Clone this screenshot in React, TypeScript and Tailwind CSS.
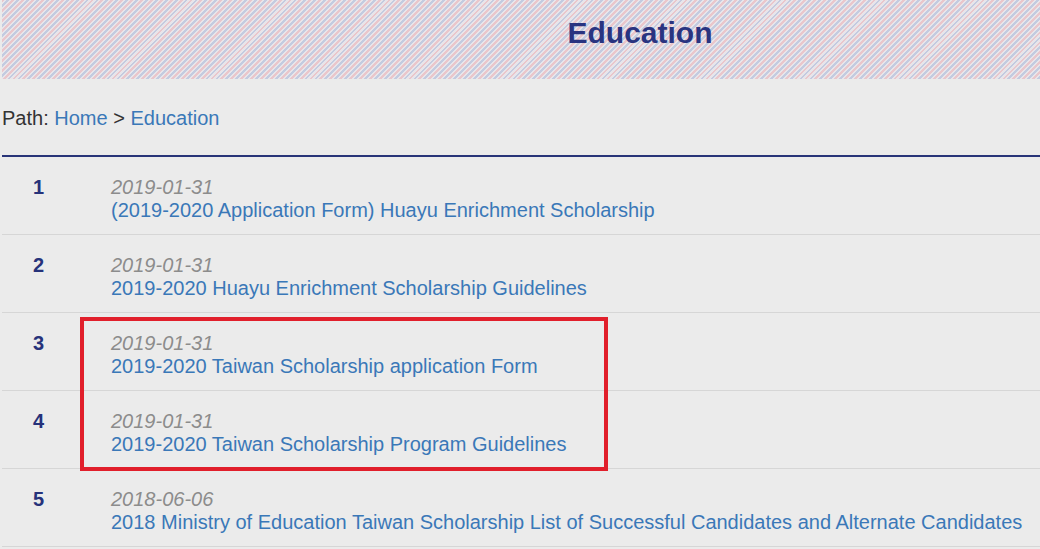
import React from "react";

const rows = [
  { n: 1, date: "2019-01-31", title: "(2019-2020 Application Form) Huayu Enrichment Scholarship" },
  { n: 2, date: "2019-01-31", title: "2019-2020 Huayu Enrichment Scholarship Guidelines" },
  { n: 3, date: "2019-01-31", title: "2019-2020 Taiwan Scholarship application Form" },
  { n: 4, date: "2019-01-31", title: "2019-2020 Taiwan Scholarship Program Guidelines" },
  { n: 5, date: "2018-06-06", title: "2018 Ministry of Education Taiwan Scholarship List of Successful Candidates and Alternate Candidates" },
];

export default function App() {
  return (
    <div
      className="relative w-[1040px] h-[549px] overflow-hidden bg-[#ebebeb] pl-[2px]"
      style={{ fontFamily: '"Liberation Sans", Arial, sans-serif' }}
    >
      <div className="h-[79px] flex justify-center pl-[238px] pt-[15px] bg-[repeating-linear-gradient(135deg,#eac6cb_0px,#eac6cb_2px,#e8e5ea_2px,#e8e5ea_3.5px,#c3cbe0_3.5px,#c3cbe0_5.5px,#e8e5ea_5.5px,#e8e5ea_7px)]">
        <h1 className="text-[30px] leading-[36px] font-bold text-[#2a3480]">Education</h1>
      </div>

      <div className="mt-[27px] text-[20px] leading-[24px] text-[#333333]">
        Path: <a className="text-[#3a78b8]">Home</a> &gt; <a className="text-[#3a78b8]">Education</a>
      </div>

      <div className="mt-[25px] h-[2px] bg-[#283478]" />

      <div>
        {rows.map((r) => (
          <div key={r.n} className="flex h-[78px] border-b border-[#d6d6d6] pt-[19px]">
            <div className="w-[73px] text-center text-[20px] leading-[23px] font-bold text-[#26327a]">{r.n}</div>
            <div className="pl-[36px] text-[20px] leading-[23px]">
              <div className="italic text-[#8c8c8c]">{r.date}</div>
              <a className="text-[#3a78b8] whitespace-nowrap">{r.title}</a>
            </div>
          </div>
        ))}
      </div>

      <div className="absolute left-[80px] top-[317px] w-[528px] h-[154px] border-[4px] border-[#e11f2b]" />
    </div>
  );
}
